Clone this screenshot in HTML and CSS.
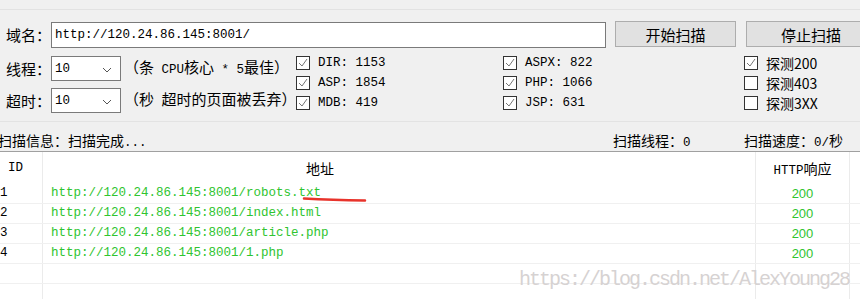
FILE: index.html
```html
<!DOCTYPE html>
<html lang="zh-CN">
<head>
    <meta charset="UTF-8">
    <title>扫描</title>
    <link rel="stylesheet" href="styles.css">
</head>
<body>
    <div class="topbar"></div>

    <div class="form">
        <div class="url-row">
            <span class="lbl">域名：</span>
            <div class="input mono">http://120.24.86.145:8001/</div>
            <button class="btn start">开始扫描</button>
            <button class="btn stop">停止扫描</button>
        </div>

        <div class="options">
            <div class="settings">
                <div class="setting">
                    <span class="lbl">线程：</span>
                    <div class="select">
                        <span class="mono">10</span>
                        <svg width="10" height="6" viewBox="0 0 10 6"><polyline points="1,1 5,5 9,1" fill="none" stroke="#555" stroke-width="1"/></svg>
                    </div>
                    <span class="hint">（条<span class="mono"> CPU</span>核心<span class="mono"> * 5</span>最佳）</span>
                </div>
                <div class="setting">
                    <span class="lbl">超时：</span>
                    <div class="select">
                        <span class="mono">10</span>
                        <svg width="10" height="6" viewBox="0 0 10 6"><polyline points="1,1 5,5 9,1" fill="none" stroke="#555" stroke-width="1"/></svg>
                    </div>
                    <span class="hint">（秒<span class="mono"> </span>超时的页面被丢弃）</span>
                </div>
            </div>

            <div class="checks col1">
                <div class="check"><span class="box"><svg width="12" height="12" viewBox="0 0 12 12"><polyline points="2,6 5,9 10,2" fill="none" stroke="#777" stroke-width="1"/></svg></span><span class="mono">DIR: 1153</span></div>
                <div class="check"><span class="box"><svg width="12" height="12" viewBox="0 0 12 12"><polyline points="2,6 5,9 10,2" fill="none" stroke="#777" stroke-width="1"/></svg></span><span class="mono">ASP: 1854</span></div>
                <div class="check"><span class="box"><svg width="12" height="12" viewBox="0 0 12 12"><polyline points="2,6 5,9 10,2" fill="none" stroke="#777" stroke-width="1"/></svg></span><span class="mono">MDB: 419</span></div>
            </div>

            <div class="checks col2">
                <div class="check"><span class="box"><svg width="12" height="12" viewBox="0 0 12 12"><polyline points="2,6 5,9 10,2" fill="none" stroke="#777" stroke-width="1"/></svg></span><span class="mono">ASPX: 822</span></div>
                <div class="check"><span class="box"><svg width="12" height="12" viewBox="0 0 12 12"><polyline points="2,6 5,9 10,2" fill="none" stroke="#777" stroke-width="1"/></svg></span><span class="mono">PHP: 1066</span></div>
                <div class="check"><span class="box"><svg width="12" height="12" viewBox="0 0 12 12"><polyline points="2,6 5,9 10,2" fill="none" stroke="#777" stroke-width="1"/></svg></span><span class="mono">JSP: 631</span></div>
            </div>

            <div class="checks col3">
                <div class="check"><span class="box"><svg width="12" height="12" viewBox="0 0 12 12"><polyline points="2,6 5,9 10,2" fill="none" stroke="#777" stroke-width="1"/></svg></span><span>探测200</span></div>
                <div class="check"><span class="box"></span><span>探测403</span></div>
                <div class="check"><span class="box"></span><span>探测3XX</span></div>
            </div>
        </div>
    </div>

    <div class="status">
        <div class="info">扫描信息：扫描完成<span class="mono">...</span></div>
        <div class="threads">扫描线程：<span class="mono">0</span></div>
        <div class="speed">扫描速度：<span class="mono">0/</span>秒</div>
    </div>

    <div class="table">
        <div class="tr head">
            <div class="td id mono">ID</div>
            <div class="td url">地址</div>
            <div class="td code"><span class="mono">HTTP</span>响应</div>
            <div class="td rest"></div>
        </div>
        <div class="tr">
            <div class="td id mono">1</div>
            <div class="td url mono">http://120.24.86.145:8001/robots.txt</div>
            <div class="td code">200</div>
            <div class="td rest"></div>
        </div>
        <div class="tr">
            <div class="td id mono">2</div>
            <div class="td url mono">http://120.24.86.145:8001/index.html</div>
            <div class="td code">200</div>
            <div class="td rest"></div>
        </div>
        <div class="tr">
            <div class="td id mono">3</div>
            <div class="td url mono">http://120.24.86.145:8001/article.php</div>
            <div class="td code">200</div>
            <div class="td rest"></div>
        </div>
        <div class="tr">
            <div class="td id mono">4</div>
            <div class="td url mono">http://120.24.86.145:8001/1.php</div>
            <div class="td code">200</div>
            <div class="td rest"></div>
        </div>
        <div class="tr">
            <div class="td id"></div>
            <div class="td url"></div>
            <div class="td code"></div>
            <div class="td rest"></div>
        </div>
        <div class="tr">
            <div class="td id"></div>
            <div class="td url"></div>
            <div class="td code"></div>
            <div class="td rest"></div>
        </div>

        <svg class="mark" width="66" height="6" viewBox="0 0 66 6"><path d="M2 1.5 Q30 3 63 3.5" fill="none" stroke="#e8332b" stroke-width="2.5" stroke-linecap="round"/></svg>
        <div class="watermark">https://blog.csdn.net/AlexYoung28</div>
    </div>
</body>
</html>
```

FILE: styles.css
```css
* {
    margin: 0;
    padding: 0;
    box-sizing: border-box;
}

body {
    width: 860px;
    height: 299px;
    overflow: hidden;
    background: #f0f0f0;
    color: #000;
    font-family: "Noto Sans CJK SC", sans-serif;
    font-size: 14px;
    line-height: 20px;
}

.mono {
    font-family: "Liberation Mono", "Noto Sans CJK SC", monospace;
    font-size: 12.5px;
}

.topbar {
    height: 10px;
    border-bottom: 1px solid #e2e2e2;
}

.form {
    padding-left: 6px;
}

/* url row */
.url-row {
    display: flex;
    align-items: flex-start;
    margin-top: 11px;
    height: 27px;
}

.lbl {
    width: 45px;
    font-size: 15px;
    line-height: 26px;
    flex: none;
}

.url-row .lbl {
    margin-top: 1px;
}

.input {
    width: 555px;
    height: 26px;
    margin-top: 1px;
    padding: 0 3px;
    line-height: 24px;
    background: #fff;
    border: 1px solid #7a7a7a;
    flex: none;
}

.btn {
    height: 26px;
    font-family: "Noto Sans CJK SC", sans-serif;
    font-size: 15px;
    color: #000;
    background: #e1e1e1;
    border: 1px solid #adadad;
    flex: none;
}

.start {
    width: 121px;
    margin-left: 9px;
}

.stop {
    width: 130px;
    margin-left: 10px;
}

/* options */
.options {
    display: flex;
    margin-top: 8px;
}

.settings {
    width: 290px;
    display: flex;
    flex-direction: column;
    gap: 7px;
    flex: none;
}

.setting {
    display: flex;
    align-items: center;
    height: 25px;
}

.setting .lbl {
    line-height: 25px;
}

.select {
    width: 70px;
    height: 25px;
    display: flex;
    align-items: center;
    justify-content: space-between;
    padding: 0 8px 0 3px;
    background: #fff;
    border: 1px solid #7a7a7a;
    flex: none;
}

.select svg {
    margin-top: 2px;
}

.hint {
    margin-left: 3px;
    font-size: 15px;
    white-space: nowrap;
}

.checks {
    margin-top: -3px;
    flex: none;
}

.col1 {
    width: 207px;
}

.col2 {
    width: 241px;
}

.check {
    display: flex;
    align-items: center;
    height: 20px;
    gap: 8px;
}

.box {
    width: 14px;
    height: 14px;
    display: flex;
    align-items: center;
    justify-content: center;
    background: #fff;
    border: 1px solid #333;
}

/* status bar */
.status {
    display: flex;
    margin-top: 8px;
    height: 31px;
    padding-top: 8px;
    border-top: 1px solid #e3e3e3;
    border-bottom: 1px solid #a0a0a0;
}

.info {
    flex: 1;
    margin-left: -2px;
}

.threads {
    width: 131px;
}

.speed {
    width: 116px;
}

/* result table */
.table {
    position: relative;
    height: 147px;
    background: #fff;
}

.tr {
    display: grid;
    grid-template-columns: 43px 713px 94px 1fr;
    height: 20px;
    border-bottom: 1px solid #f0f0f0;
}

.tr.head {
    height: 32px;
    border-bottom: none;
}

.td {
    border-right: 1px solid #ebebeb;
    line-height: 19px;
    white-space: nowrap;
    overflow: hidden;
}

.head .td {
    line-height: 32px;
}

.td.rest {
    border-right: none;
}

.head .td.id {
    padding-left: 8px;
}

.td.url {
    padding-left: 8px;
    color: #2fc42f;
}

.head .td.url {
    padding-left: 263px;
    color: #000;
}

.td.code {
    text-align: center;
    font-family: "Liberation Sans", sans-serif;
    font-size: 13px;
    color: #2fc42f;
}

.head .td.code {
    font-family: "Noto Sans CJK SC", sans-serif;
    font-size: 14px;
    color: #000;
}

.mark {
    position: absolute;
    left: 302px;
    top: 45px;
}

.watermark {
    position: absolute;
    left: 519px;
    top: 118px;
    font-family: "Liberation Mono", monospace;
    font-size: 20px;
    line-height: 20px;
    letter-spacing: -2px;
    color: #d6d2d2;
    white-space: nowrap;
}
```
